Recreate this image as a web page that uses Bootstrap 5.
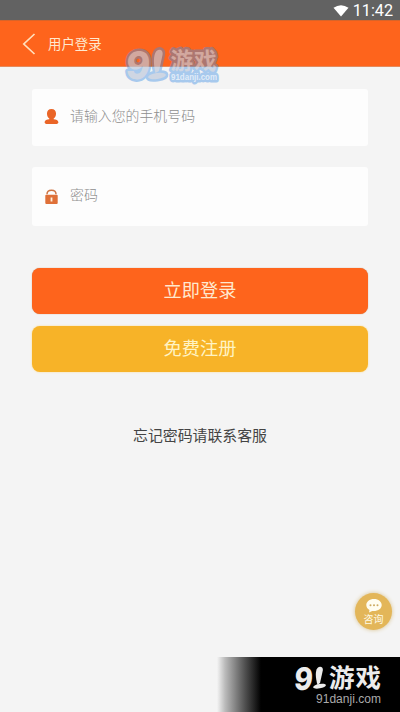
<!DOCTYPE html>
<html lang="zh-CN">
<head>
<meta charset="utf-8">
<meta name="viewport" content="width=device-width, initial-scale=1">
<title>用户登录</title>
<link href="https://cdn.jsdelivr.net/npm/bootstrap@5.3.0/dist/css/bootstrap.min.css" rel="stylesheet">
<style>
body{font-family:"Noto Sans CJK SC",sans-serif;background:#f4f4f4;height:712px;overflow:hidden}
.status{height:20px;background:#626262;font:400 16.2px/20px Roboto,sans-serif;padding:2px 7px 0 0}
.topbar{height:47px;background:#fe641c;border-bottom:1px solid #e58a5c;border-top:1px solid #d96429;padding-left:22px;color:#ffe9cf}
.topbar h1{font-size:13.4px;font-weight:400;line-height:20px;margin-left:12px;padding-bottom:1px}
.page{padding:22px 32px 0}
.field{height:57px;background:#fdfdfd;border-radius:3px;padding-left:12px}
.field-pass{height:59px;margin-top:21px}
.field .form-control{font-size:13.9px;line-height:20px;padding:0 0 5px;margin-left:11px;color:#777;font-weight:300}
.field .form-control::placeholder{color:#8e8e8e;opacity:1}
.action{height:46px;border:0;border-radius:8px;font-size:18.2px;line-height:26px;padding:0 0 4px}
.login{background:#fe641c;color:#ffe9cf;box-shadow:0 0 1px #b97d55;margin-top:42px}
.register{background:#f7b328;color:#fff3c4;box-shadow:0 0 2px #ffd980;margin-top:12px}
.forgot{font-size:14.9px;line-height:22px;color:#444;margin-top:52px}
.wm{left:120px;top:42px;z-index:2}
.chat{left:355px;top:593px;width:37px;height:37px;background:#e3b659;color:#fffbe8;font-size:10px;line-height:12px;box-shadow:0 0 4px #d9c28c}
.brand{left:217px;top:657px;width:183px;height:55px;background:linear-gradient(90deg,#f4f4f4 0,#bbb 8px,#555 27px,#000 44px)}
</style>
<script src="https://cdn.jsdelivr.net/npm/bootstrap@5.3.0/dist/js/bootstrap.bundle.min.js"></script>
</head>
<body class="position-relative">
<div class="status d-flex justify-content-end align-items-center text-white">
  <svg width="16" height="12" viewBox="0 0 16 12" class="me-1"><path d="M.5 2.8Q8-2.4 15.500 2.800L8 11.500Z" fill="#fff"/></svg>
  <span>11:42</span>
</div>
<header class="topbar d-flex align-items-center">
  <svg width="14" height="22" viewBox="0 0 14 22" fill="none" stroke="#ffe0bd" stroke-width="1.7"><path d="M12.500 1L1.800 11L12.500 21"/></svg>
  <h1 class="mb-0">用户登录</h1>
</header>
<main class="page d-flex flex-column">
  <div class="field d-flex align-items-center">
    <svg class="flex-shrink-0 mb-1" width="15" height="16" viewBox="0 0 15 16" fill="#ea6527"><path d="M7.500 0C4.400 0 2.800 2 3 5C3.100 7 4 8.500 5.300 9.500V10.300C3 10.700.6 11.200.6 13.200C.6 15 4 15.700 7.500 15.700S14.400 15 14.400 13.200C14.400 11.200 12 10.700 9.700 10.300V9.500C11 8.500 11.900 7 12 5C12.200 2 10.600 0 7.500 0Z" transform="translate(0 1)"/></svg>
    <input class="form-control border-0 bg-transparent shadow-none" type="tel" placeholder="请输入您的手机号码">
  </div>
  <div class="field field-pass d-flex align-items-center">
    <svg class="flex-shrink-0" width="15" height="16" viewBox="0 0 15 16"><path d="M3 5.200C3-.2 12-.2 12 5.200" fill="none" stroke="#cf7443" stroke-width="1.500"/><rect x="1.300" y="5.700" width="12.400" height="9.300" rx="1" fill="#df7038"/><path d="M7.500 8.500V12.500" stroke="#fff0dc" stroke-width="1.800"/></svg>
    <input class="form-control border-0 bg-transparent shadow-none" type="password" placeholder="密码">
  </div>
  <button type="button" class="btn action login w-100">立即登录</button>
  <button type="button" class="btn action register w-100">免费注册</button>
  <p class="forgot text-center mb-0">忘记密码请联系客服</p>
</main>
<svg class="wm position-absolute" width="102" height="44" viewBox="0 0 102 44">
  <defs>
    <g id="logo">
      <text transform="translate(5 36.500) skewX(-5) scale(.96 1)" font-family="Inter" font-weight="800" font-size="38">9</text>
      <path d="M36.500 9C40 6 43.500 8.500 42.500 13L39 29L35.500 31C33.500 23 33 13 36.500 9Z"/>
      <ellipse cx="37" cy="34" rx="9" ry="3" transform="rotate(-8 37 34)"/>
      <text x="50.500" y="27" font-family="Noto Sans CJK SC" font-weight="700" font-size="22.500" textLength="46">游戏</text>
    </g>
    <text id="site" x="51" y="38" font-family="Liberation Sans" font-weight="700" font-size="9.500" textLength="46" lengthAdjust="spacingAndGlyphs">91danji.com</text>
  </defs>
  <g fill="#3f8fe4" stroke="#3f8fe4" stroke-linejoin="round" opacity=".42"><use href="#logo" stroke-width="5"/><use href="#site" stroke-width="5"/></g>
  <g fill="#ffe6d8" opacity=".45"><use href="#logo"/></g>
  <use href="#site" fill="#fff" opacity=".65"/>
</svg>
<div class="chat position-absolute rounded-circle d-flex flex-column align-items-center justify-content-center">
  <svg width="16" height="14" viewBox="0 0 16 14"><path d="M8 0C3.500 0 .3 2.700.3 6C.3 8.300 1.500 10 3.500 11L3 13.600L6.200 12C12 12.500 15.700 9.600 15.700 6C15.700 2.700 12.500 0 8 0Z" fill="#fffdf0"/><g fill="#ccaa60"><circle cx="4.500" cy="6.200" r="1"/><circle cx="8" cy="6.200" r="1"/><circle cx="11.500" cy="6.200" r="1"/></g></svg>
  <span>咨询</span>
</div>
<svg class="brand position-absolute" viewBox="0 0 183 55" fill="#ececec">
  <text transform="translate(76.500 32.500) skewX(-5) scale(.9 1)" font-family="Inter" font-weight="800" font-size="31">9</text>
  <path d="M100.500 11C103 8.500 106.500 10 105.800 13.500L103 26L100.500 28C98.500 21 98 14 100.500 11Z"/>
  <ellipse cx="102.500" cy="29.200" rx="6.500" ry="2.200" transform="rotate(-10 102.500 29.200)"/>
  <text x="112" y="30" font-family="Noto Sans CJK SC" font-weight="700" font-size="25.500" textLength="52">游戏</text>
  <text x="99" y="46" font-family="Liberation Sans" font-size="12" fill="#aaa" textLength="65">91danji.com</text>
</svg>
</body>
</html>
